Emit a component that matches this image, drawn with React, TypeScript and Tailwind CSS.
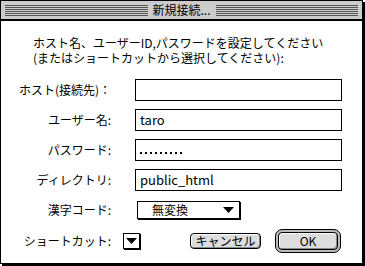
import React from "react";

const font = "font-['Noto_Sans_CJK_JP','Noto_Sans',sans-serif]";

const Stripes: React.FC<{ className?: string }> = ({ className }) => (
  <div className={`flex flex-col gap-[1px] ${className ?? ""}`}>
    {[0, 1, 2, 3, 4, 5].map((i) => (
      <div key={i} className="h-px bg-[#555]" />
    ))}
  </div>
);

const Field: React.FC<{ label: string; children?: React.ReactNode }> = ({ label, children }) => (
  <div className="flex items-center h-[22px]">
    <div className="w-[111px] text-right pr-[1px] leading-none">{label}</div>
    <div className="ml-[23px] w-[207px] h-[22px] border border-black bg-white flex items-center pl-[4px] text-[13px]">
      {children}
    </div>
  </div>
);

const Triangle: React.FC = () => (
  <svg width="11" height="6" viewBox="0 0 11 6">
    <path d="M0 0H11L5.5 6Z" fill="#000" />
  </svg>
);

const App: React.FC = () => {
  return (
    <div className={`w-[365px] h-[266px] bg-white ${font} text-[12px] text-black`}>
      <div className="w-[363px] h-[264px] border border-black shadow-[2px_2px_0_#000] flex flex-col">
        {/* title bar */}
        <div className="h-[20px] bg-[#cccccc] border-b-2 border-black flex items-center px-[4px] gap-[2px]">
          <Stripes className="flex-1" />
          <div className="px-[3px] text-[12px] leading-none">新規接続...</div>
          <Stripes className="flex-1" />
        </div>

        <div className="flex flex-col pt-[14px]">
          <div className="pl-[32px] leading-[15px]">
            <p>ホスト名、ユーザーID,パスワードを設定してください</p>
            <p>(またはショートカットから選択してください):</p>
          </div>

          <div className="flex flex-col gap-[8px] mt-[14px]">
            <Field label="ホスト(接続先)：" />
            <Field label="ユーザー名:">taro</Field>
            <Field label="パスワード:">
              <div className="flex gap-[3px] mt-[5px]">
                {[0, 1, 2, 3, 4, 5, 6, 7, 8].map((i) => (
                  <span key={i} className="w-[2px] h-[2px] bg-black" />
                ))}
              </div>
            </Field>
            <Field label="ディレクトリ:">public_html</Field>
          </div>

          <div className="flex items-center mt-[10px] h-[18px]">
            <div className="w-[111px] text-right pr-[1px] leading-none">漢字コード:</div>
            <div className="ml-[25px] w-[103px] h-[18px] border border-black shadow-[1px_1px_0_#000] flex items-center pl-[14px] pr-[5px]">
              <span className="flex-1 leading-none">無変換</span>
              <Triangle />
            </div>
          </div>

          <div className="flex items-center mt-[10px] h-[24px]">
            <div className="w-[111px] text-right pr-[1px] leading-none">ショートカット:</div>
            <div className="ml-[11px] w-[17px] h-[16px] border border-black shadow-[1px_1px_0_#000] flex items-center justify-center">
              <Triangle />
            </div>
            <button className="ml-[50px] w-[71px] h-[16px] rounded-[4px] border border-black bg-[#dddddd] shadow-[inset_1px_1px_0_#fff,inset_-1px_-1px_0_#888] leading-none text-[12px]">
              キャンセル
            </button>
            <div className="ml-[14px] w-[66px] h-[24px] rounded-[7px] border border-black bg-[#bbbbbb] p-[2px]">
              <button className="w-full h-full rounded-[4px] border border-black bg-[#dddddd] shadow-[inset_1px_1px_0_#fff,inset_-1px_-1px_0_#888] leading-none text-[12px]">
                OK
              </button>
            </div>
          </div>
        </div>
      </div>
    </div>
  );
};

export default App;
